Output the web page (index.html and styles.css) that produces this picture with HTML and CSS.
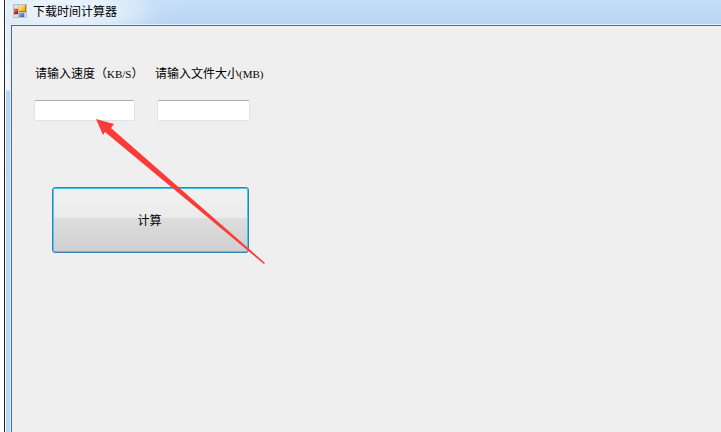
FILE: index.html
```html
<!DOCTYPE html>
<html lang="zh-CN">
<head>
  <meta charset="UTF-8">
  <meta name="viewport" content="width=device-width, initial-scale=1.0">
  <title>下载时间计算器</title>
  <link rel="stylesheet" href="styles.css">
</head>
<body>
  <div class="window">
    <header class="titlebar">
      <svg class="app-icon" width="14" height="14" viewBox="0 0 14 14" shape-rendering="crispEdges" aria-hidden="true">
        <defs>
          <linearGradient id="yellow" x1="0" y1="0" x2="1" y2="1">
            <stop offset="0" stop-color="#fff0a0"/>
            <stop offset="1" stop-color="#f0a800"/>
          </linearGradient>
          <linearGradient id="red" x1="0" y1="0" x2="1" y2="1">
            <stop offset="0" stop-color="#f08070"/>
            <stop offset="1" stop-color="#b01808"/>
          </linearGradient>
          <linearGradient id="blue" x1="0" y1="0" x2="1" y2="1">
            <stop offset="0" stop-color="#90b8f8"/>
            <stop offset="1" stop-color="#2860c8"/>
          </linearGradient>
        </defs>
        <path d="M0 0h14v14H0z" fill="#bfc0c2"/>
        <path d="M1 1h4v3H1zM1 11h4v2H1zM12 9h1v4h-1z" fill="#dcdfe4"/>
        <path d="M6 1h7v7H6z" fill="#b87a10"/>
        <path d="M6 1h6v6H6z" fill="url(#yellow)"/>
        <path d="M1 5h4v5H1z" fill="#a01808"/>
        <path d="M1 5h4v4H1z" fill="url(#red)"/>
        <path d="M6 9h5v4H6z" fill="url(#blue)"/>
      </svg>
      <h1>下载时间计算器</h1>
    </header>
    <main class="client">
      <form class="calc-form">
        <div class="fields">
          <div class="field speed">
            <label for="speed">请输入速度（<span class="latin">KB/S</span>）</label>
            <input type="text" id="speed" name="speed">
          </div>
          <div class="field size">
            <label for="size">请输入文件大小<span class="latin">(MB)</span></label>
            <input type="text" id="size" name="size">
          </div>
        </div>
        <button type="button">计算</button>
        <svg class="arrow" width="172" height="148" viewBox="0 0 172 148" aria-hidden="true">
          <path d="M1 1L19 6L16 10L170 145L169 146L10 14L8 17Z" fill="#fb3b37"/>
        </svg>
      </form>
    </main>
  </div>
</body>
</html>
```

FILE: styles.css
```css
* {
  box-sizing: border-box;
}

body {
  margin: 0;
  background: #fff;
  color: #000;
  font-family: "Noto Sans CJK SC", sans-serif;
  font-size: 12px;
}

.window {
  display: flex;
  flex-direction: column;
  min-height: 100vh;
  margin-left: 4px;
  padding-left: 6px;
  border-left: 1px solid #1b2430;
  background:
    linear-gradient(#fff, #fff) 0 0 / 1px 100% no-repeat,
    linear-gradient(#d9e9f9, #eef6fe 90px, #b5d3f2 91px, #b9d8f8 200px);
}

.titlebar {
  display: flex;
  align-items: center;
  gap: 6px;
  height: 25px;
  margin-left: -5px;
  padding: 0 0 3px 7px;
  border-bottom: 1px solid #e4f1fd;
  background:
    radial-gradient(ellipse 90px 26px at 66px 12px, rgba(255, 255, 255, 0.6), rgba(255, 255, 255, 0.45) 50%, rgba(255, 255, 255, 0)),
    linear-gradient(to right, rgba(255, 255, 255, 0.4), rgba(255, 255, 255, 0) 180px),
    linear-gradient(#c6dff7, #b7d4f2);
}

.titlebar h1 {
  margin: 0;
  font-size: 12px;
  font-weight: normal;
  line-height: 16px;
}

.client {
  flex: 1;
  padding: 38px 22px;
  border-top: 1px solid #5b6a7b;
  border-left: 1px solid #5b6a7b;
  background: #efefef;
  box-shadow: -1px 0 0 #dcecfc;
}

.calc-form {
  position: relative;
}

.fields {
  display: flex;
}

.field {
  display: flex;
  flex-direction: column;
  align-items: flex-start;
  gap: 18px;
}

.field label {
  height: 18px;
  line-height: 18px;
  white-space: nowrap;
}

.speed {
  width: 121px;
}

.speed label {
  padding-left: 1px;
}

.latin {
  font-family: "Liberation Serif", serif;
  font-size: 11px;
  line-height: 1;
}

.field input {
  width: 101px;
  height: 21px;
  padding: 1px 3px;
  border: 1px solid #e2e3ea;
  border-top-color: #abadb3;
  border-radius: 2px;
  background: #fff;
  font: inherit;
}

.size input {
  width: 93px;
  margin-left: 2px;
}

button {
  display: block;
  width: 197px;
  height: 66px;
  margin: 66px 0 0 18px;
  padding: 0 2px 2px 0;
  border: 1px solid #3c7fb1;
  border-radius: 3px;
  background: linear-gradient(#f2f2f2, #ebebeb 47%, #dddddd 47%, #cfcfcf);
  box-shadow: inset 0 0 0 1px #48c8ec;
  color: #000;
  font: inherit;
}

/* pointer from the button up to the speed box */
.arrow {
  position: absolute;
  top: 54px;
  left: 61px;
  pointer-events: none;
}
```
